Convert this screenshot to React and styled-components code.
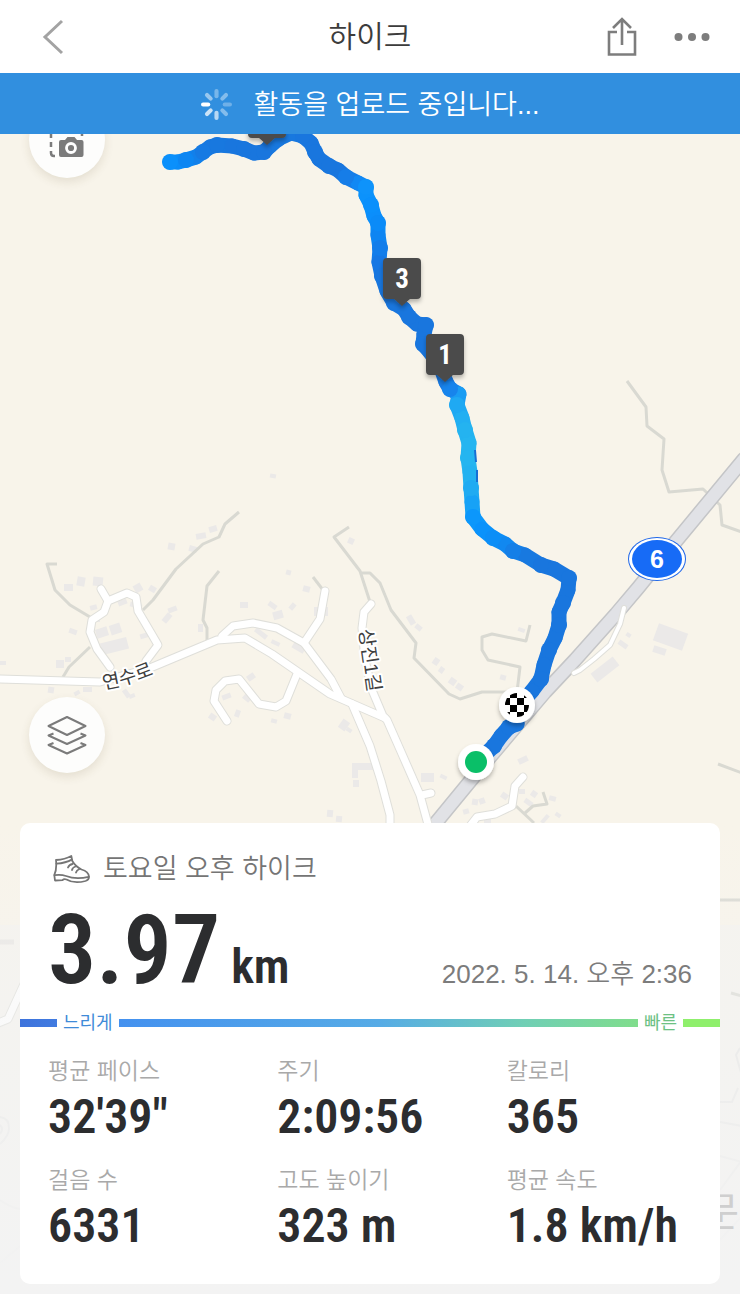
import React from "react";
import styled, { createGlobalStyle } from "styled-components";

const sans = `"Liberation Sans", "Noto Sans CJK KR", sans-serif`;
const narrow = `"Roboto Condensed", "Roboto", "Noto Sans CJK KR", sans-serif`;

const GlobalStyle = createGlobalStyle`
  * { box-sizing: border-box; }
  body { margin: 0; font-family: ${sans}; background: #f3f3f3; }
  button { border: 0; padding: 0; background: none; font: inherit; cursor: pointer; }
`;

const Screen = styled.div`
  display: flex;
  flex-direction: column;
  min-height: 100vh;
`;

const Header = styled.header`
  display: grid;
  grid-template-columns: 1fr auto 1fr;
  align-items: center;
  height: 73px;
  padding: 0 18px;
  background: #fff;
`;

const Title = styled.h1`
  margin: 0;
  font-size: 30px;
  line-height: 40px;
  font-weight: 350;
  color: #3c3c3c;
`;

const HeaderActions = styled.div`
  display: flex;
  justify-content: flex-end;
  gap: 10px;
`;

const IconButton = styled.button`
  display: flex;
  align-items: center;
  justify-content: center;
  width: ${(p) => (p.$back ? "72px" : "60px")};
  height: 48px;
  color: ${(p) => (p.$back ? "#a3a3a3" : "#7d7d7d")};
`;

const Banner = styled.div`
  display: flex;
  align-items: center;
  justify-content: center;
  gap: 22px;
  height: 61px;
  padding-top: 2px;
  background: #318fdf;
  color: #fff;
  font-size: 27px;
  line-height: 36px;
  font-weight: 350;
`;

const MapArea = styled.main`
  position: relative;
  flex: 1;
  display: flex;
  flex-direction: column;
  justify-content: flex-end;
  padding: 480px 20px 10px;
  overflow: hidden;
  background: #f8f4ea;
`;

const MapCanvas = styled.svg`
  position: absolute;
  inset: 0;
  width: 100%;
  height: 100%;
`;

const RoundButton = styled.button`
  position: relative;
  display: flex;
  align-items: center;
  justify-content: center;
  flex: none;
  width: 76px;
  height: 76px;
  margin: 0 0 50px 9px;
  border-radius: 50%;
  background: #fdfdfc;
  color: #7b7b7b;
  box-shadow: 0 4px 10px rgba(90, 70, 30, 0.12);
`;

const CameraButton = styled(RoundButton)`
  position: absolute;
  top: -32px;
  left: 20px;
`;

const Card = styled.section`
  position: relative;
  padding: 28px 0;
  border-radius: 10px;
  background: #fff;
`;

const CardTitle = styled.h2`
  display: flex;
  align-items: center;
  gap: 12px;
  margin: 0;
  padding: 0 33px;
  font-size: 27px;
  line-height: 36px;
  font-weight: 350;
  color: #757575;
`;

const Summary = styled.div`
  display: flex;
  align-items: baseline;
  justify-content: space-between;
  margin: 11px 0 8px;
  padding: 0 28px;
`;

const Distance = styled.p`
  display: flex;
  align-items: baseline;
  gap: 11px;
  margin: 0;
  font-family: ${narrow};
  font-size: 96px;
  line-height: 104px;
  font-weight: 600;
  color: #2c2d2f;
`;

const Unit = styled.span`
  font-size: 48px;
  line-height: 60px;
`;

const DateText = styled.time`
  font-size: 26px;
  line-height: 36px;
  font-weight: 350;
  color: #7c7c7c;
`;

const PaceScale = styled.div`
  display: flex;
  align-items: center;
  gap: 6px;
  height: 26px;
  font-size: 18px;
  line-height: 26px;
`;

const ScaleBar = styled.span`
  flex: ${(p) => (p.$wide ? "1" : "0 0 37px")};
  height: 8px;
  background: ${(p) => p.$fill};
`;

const ScaleLabel = styled.span`
  color: ${(p) => p.$color};
`;

const Stats = styled.dl`
  display: grid;
  grid-template-columns: repeat(3, 1fr);
  gap: 17px 16px;
  margin: 19px 0 0;
  padding-left: 28px;
`;

const StatLabel = styled.dt`
  font-size: 23px;
  line-height: 32px;
  font-weight: 350;
  color: #a9a9a9;
`;

const StatValue = styled.dd`
  margin: 0;
  font-family: ${narrow};
  font-size: 48px;
  line-height: 60px;
  font-weight: 600;
  color: #2c2d2f;
  white-space: nowrap;
`;

const stats = [
  ["평균 페이스", `32'39"`],
  ["주기", "2:09:56"],
  ["칼로리", "365"],
  ["걸음 수", "6331"],
  ["고도 높이기", "323 m"],
  ["평균 속도", "1.8 km/h"],
];

/* Recorded track: x, y and the pace colour from that point on */
const track = [
  [170, 162, "#0b90fb"], [178, 162, "#0b8cf8"], [186, 160, "#0d86f2"], [196, 157, "#1280ea"],
  [203, 152, "#167ae3"], [210, 147, "#1878df"], [217, 145, "#1878df"], [232, 146, "#1976de"],
  [244, 149, "#1976de"], [254, 153, "#1976de"], [264, 152, "#1976de"], [270, 146, "#1878df"],
  [278, 139, "#1878df"], [291, 133, "#1878df"], [303, 136, "#1976de"], [311, 143, "#1976de"],
  [315, 152, "#1976de"], [319, 159, "#1976de"], [329, 166, "#1976de"], [338, 170, "#1976de"],
  [346, 177, "#167de8"], [358, 183, "#1188f4"], [366, 187, "#0e93fb"], [366, 195, "#0c92fb"],
  [371, 205, "#0a90fc"], [374, 216, "#0b8efb"], [378, 223, "#0b8bf8"], [378, 235, "#0e85f2"],
  [380, 248, "#137dea"], [379, 262, "#1677e4"], [382, 276, "#1976de"], [387, 291, "#1976de"],
  [394, 303, "#1976de"], [404, 309, "#1976de"], [409, 317, "#1976de"], [417, 324, "#1976de"],
  [426, 325, "#1976de"], [424, 334, "#1976de"], [423, 344, "#1976de"], [430, 352, "#1976de"],
  [441, 368, "#1976de"], [446, 382, "#187be4"], [450, 389, "#1784ec"], [459, 394, "#1a9cf3"],
  [457, 405, "#1fa9f3"], [462, 418, "#22aff2"], [465, 430, "#24b3f0"], [469, 443, "#25b5f0"],
  [468, 458, "#25b5f0"], [470, 472, "#24b2f0"], [471, 488, "#20abf2"], [472, 502, "#17a2f6"],
  [473, 517, "#0c97fb"], [482, 529, "#0a92fb"], [493, 538, "#0c8ef7"], [505, 544, "#1188f0"],
  [513, 551, "#157fe7"], [525, 555, "#1879e0"], [541, 565, "#1976de"], [554, 569, "#1976de"],
  [569, 578, "#1976de"], [568, 590, "#1976de"], [563, 603, "#1976de"], [559, 612, "#1976de"],
  [559, 625, "#1976de"], [555, 638, "#1976de"], [549, 650, "#1976de"], [544, 665, "#1976de"],
  [541, 679, "#1976de"], [532, 691, "#1976de"], [517, 708, "#1976de"], [517, 724, "#1976de"],
  [509, 727, "#1976de"], [501, 736, "#1976de"], [494, 746, "#1976de"], [477, 762, "#1976de"],
];

const streets = [
  "M-4 679 L100 682 L150 668 L217 640 L245 638 L272 654 L330 694 L385 718",
  "M110 667 L97 649 L90 632 L92 620 L104 612 L108 601 L127 593 L136 597 L138 611 L151 633 L158 645 L146 661",
  "M108 601 L101 589",
  "M222 636 L233 626 L253 623 L277 628 L304 643 L331 679 L341 698",
  "M304 643 L320 619 L325 591",
  "M371 604 L364 612 L362 628 L365 660 L372 690 L383 716 L387 720 L402 754 L420 795 L429 828",
  "M227 721 L214 701 L216 690 L225 681 L239 679 L259 704 L276 707 L286 701 L297 674",
  "M352 704 L370 746 L381 781 L390 815 L390 828",
  "M422 795 L431 793",
  "M470 826 L477 817 L495 814 L512 806 L515 786 L523 777",
  "M-4 1024 L8 1019 L24 984",
];

const thinStreets = ["M624 608 L620 624 L610 645 L594 659 L580 670 L574 673"];

const paths = [
  "M57 564 L47 564 L55 590 L70 605 L90 617",
  "M239 512 L225 524 L219 537 L203 544 L176 569 L153 600 L143 610",
  "M219 571 L207 586 L203 620 L207 628 L207 641",
  "M90 647 L69 667 L63 677",
  "M349 527 L334 537 L360 571 L370 602",
  "M360 573 L370 573 L380 583 L391 610 L416 643 L414 658 L449 694 L460 699 L482 692 L510 692",
  "M313 577 L323 590",
  "M530 625 L526 641 L492 634 L482 637 L482 650 L488 660 L520 667 L517 692",
  "M627 381 L646 407 L647 426 L664 439 L662 470 L669 492 L703 489 L720 505 L722 525 L742 532",
  "M718 764 L742 773",
  "M516 806 L534 823",
  "M525 813 L533 806 L547 804 L543 792",
  "M718 900 L742 900",
  "M731 993 L742 996",
];

/* Buildings: x, y, width, height, rotation */
const buildings = [
  [64, 584, 9, 7, 0], [77, 577, 8, 9, 10], [93, 577, 10, 9, 5], [168, 543, 7, 7, 10],
  [189, 546, 8, 6, 15], [196, 533, 10, 6, -10], [209, 526, 8, 6, -15], [96, 628, 12, 9, -18],
  [110, 624, 11, 10, -18], [101, 640, 27, 12, -14], [90, 605, 7, 5, -15], [69, 629, 8, 5, 20],
  [134, 584, 8, 8, -30], [149, 586, 7, 6, 30], [118, 600, 9, 5, -20], [130, 603, 12, 5, 15],
  [162, 615, 10, 6, -50], [168, 607, 9, 5, -20], [140, 633, 10, 5, -15], [92, 616, 8, 6, 0],
  [56, 660, 8, 8, 0], [65, 657, 6, 5, 0], [0, 661, 6, 4, 0], [48, 687, 6, 6, 10],
  [74, 691, 6, 4, -30], [83, 687, 9, 5, 0], [124, 689, 5, 9, -35], [129, 694, 6, 4, -20],
  [198, 624, 5, 8, 0], [240, 602, 8, 6, 0], [268, 603, 9, 5, 35], [273, 611, 10, 8, -15],
  [290, 603, 5, 7, 40], [303, 586, 7, 6, 15], [286, 570, 5, 5, 15], [254, 631, 14, 5, 38],
  [271, 641, 9, 4, 25], [292, 645, 13, 6, 30], [314, 607, 14, 9, 0], [247, 674, 8, 6, -35],
  [222, 694, 9, 5, -20], [243, 695, 8, 6, 40], [235, 710, 5, 7, 20], [209, 714, 7, 6, 35],
  [271, 719, 6, 4, 15], [284, 713, 7, 6, 15], [340, 720, 8, 10, 35], [346, 728, 6, 4, 35],
  [352, 763, 21, 7, 0], [352, 770, 6, 8, 0], [353, 780, 6, 7, 0], [327, 810, 6, 7, 5],
  [336, 816, 6, 6, 5], [421, 773, 13, 9, 0], [440, 775, 7, 4, 25], [348, 538, 6, 6, 25],
  [408, 615, 6, 10, -30], [415, 625, 7, 5, 40], [433, 658, 6, 7, 35], [439, 667, 5, 6, 35],
  [449, 678, 7, 7, 35], [456, 684, 7, 6, 35], [500, 675, 6, 5, 15], [518, 628, 7, 4, 20],
  [618, 642, 10, 5, 35], [626, 633, 5, 4, 35], [655, 628, 31, 18, 20], [653, 647, 13, 7, 18],
  [591, 664, 28, 11, -38], [518, 757, 10, 6, -25], [501, 793, 7, 6, 35], [472, 799, 6, 6, 10],
  [479, 798, 6, 6, -20], [463, 809, 6, 5, -15], [519, 789, 6, 5, 0], [524, 800, 9, 5, 35],
  [531, 791, 6, 6, 35], [549, 796, 7, 5, 15], [540, 817, 10, 4, -50], [555, 813, 6, 4, 35],
  [484, 819, 7, 4, 0], [270, 474, 6, 4, 10],
];

const highway = "M744 459 L677 540 L638 588 L616 614 L575 660 L545 692 L490 757 L430 830";

function KmMarker({ x, y, label }) {
  return (
    <g>
      <path
        d={`M${x - 15} ${y} h30 q4 0 4 4 v33 q0 4 -4 4 h-7 l-8 7 l-8 -7 h-7 q-4 0 -4 -4 v-33 q0 -4 4 -4z`}
        fill="#4c4c4c"
        filter="url(#drop)"
      />
      {label && (
        <text x={x} y={y + 30} textAnchor="middle" fontFamily={narrow} fontWeight="700" fontSize="27" fill="#fff">
          {label}
        </text>
      )}
    </g>
  );
}

function TrailMap() {
  return (
    <MapCanvas viewBox="0 134 740 1160" preserveAspectRatio="xMidYMin slice" role="img" aria-label="하이크 경로 지도">
      <defs>
        <filter id="drop" x="-40%" y="-40%" width="180%" height="180%">
          <feDropShadow dx="0" dy="3" stdDeviation="2" floodOpacity="0.28" />
        </filter>
        <linearGradient id="fade" x1="0" y1="0" x2="0" y2="1">
          <stop offset="0" stopColor="#f3f3f3" stopOpacity="0" />
          <stop offset="0.8" stopColor="#f3f3f3" stopOpacity="0.85" />
          <stop offset="1" stopColor="#f3f3f3" />
        </linearGradient>
        <clipPath id="flag"><circle cx="517" cy="705" r="12" /></clipPath>
        <path id="yeonsu" d="M104 689 Q124 687 160 672" />
        <path id="sangjin" d="M359 630 L369 700" />
      </defs>
      <rect x="0" y="134" width="740" height="1160" fill="#f8f4ea" />
      <path d="M0 925 H20 V1294 H0z M720 925 H740 V1294 H720z" fill="#f5f3ee" />
      <g fill="#ebe9e8">
        {buildings.map(([x, y, w, h, r]) => (
          <rect key={`${x}-${y}`} x={x} y={y} width={w} height={h} transform={`rotate(${r} ${x + w / 2} ${y + h / 2})`} />
        ))}
      </g>
      <g fill="none" stroke="#d9d9d2" strokeWidth="3" strokeLinejoin="round">
        {paths.map((d) => <path key={d} d={d} />)}
      </g>
      <g fill="none" strokeLinejoin="round" strokeLinecap="round">
        <path d={highway} stroke="#c4c5c7" strokeWidth="15" />
        <path d={highway} stroke="#e1e2e6" strokeWidth="12" />
        <g stroke="#dfdfda" strokeWidth="9">{streets.map((d) => <path key={d} d={d} />)}</g>
        <g stroke="#dfdfda" strokeWidth="6">{thinStreets.map((d) => <path key={d} d={d} />)}</g>
        <g stroke="#fff" strokeWidth="7">{streets.map((d) => <path key={d} d={d} />)}</g>
        <g stroke="#fff" strokeWidth="4">{thinStreets.map((d) => <path key={d} d={d} />)}</g>
      </g>
      <g fontSize="19" fill="#3f3f3f" stroke="#fff" strokeWidth="4" paintOrder="stroke" strokeLinejoin="round">
        <text><textPath href="#yeonsu">연수로</textPath></text>
        <text><textPath href="#sangjin">상진1길</textPath></text>
      </g>
      <g strokeLinecap="round" strokeWidth="15">
        {track.slice(1).map(([x, y], i) => (
          <line key={i} x1={track[i][0]} y1={track[i][1]} x2={x} y2={y} stroke={track[i][2]} />
        ))}
      </g>
      {track.map(([x, y, colour], i) => (i % 2 ? null : <circle key={i} cx={x} cy={y} r="8" fill={colour} />))}
      <path d="M475 450 L476 462 M477 470 L477 482" fill="none" stroke="#176fd4" strokeWidth="2" />
      <KmMarker x={267} y={97} />
      <KmMarker x={402} y={258} label="3" />
      <KmMarker x={445} y={334} label="1" />
      <g>
        <ellipse cx="657" cy="559" rx="29" ry="22" fill="#1f66e8" />
        <ellipse cx="657" cy="559" rx="28" ry="21" fill="#fff" />
        <ellipse cx="657" cy="559" rx="25" ry="19" fill="#176bf6" />
        <text x="657" y="568" textAnchor="middle" fontFamily={sans} fontWeight="700" fontSize="25" fill="#fff">6</text>
      </g>
      <circle cx="517" cy="705" r="18" fill="#fff" filter="url(#drop)" />
      <g clipPath="url(#flag)" fill="#000">
        {[0, 1, 2, 3].flatMap((r) =>
          [0, 1, 2, 3].map((c) =>
            (r + c) % 2 ? <rect key={`${r}${c}`} x={503 + c * 7} y={691 + r * 7} width="7" height="7" /> : null
          )
        )}
      </g>
      <circle cx="476" cy="762" r="18" fill="#fff" filter="url(#drop)" />
      <circle cx="476" cy="762" r="11" fill="#0abf68" />
      <g fill="none" stroke="#e4e4e2" strokeWidth="2">
        <path d="M0 1117 Q9 1118 9 1128 Q9 1136 0 1144 M0 1125 Q4 1129 0 1134 M0 1200 Q9 1207 20 1209 M20 1246 L0 1263" />
        <path d="M740 1048 L736 1055 L742 1076 M720 1102 L732 1102 L738 1088 M720 1122 L742 1126 M720 1156 L742 1162 M720 1190 L742 1160 M720 1240 L742 1216" />
        <path d="M0 942 H14" strokeWidth="5" stroke="#e9e7e4" />
      </g>
      <rect x="0" y="823" width="740" height="471" fill="url(#fade)" />
      <text x="739" y="1226" textAnchor="end" fontSize="40" fill="#cfcfcf">문</text>
    </MapCanvas>
  );
}

function Spinner() {
  const opacity = [0.35, 0.4, 0.3, 0.4, 0.65, 0.75, 1, 0.5];
  return (
    <svg width="31" height="31" viewBox="-15 -15 30 30" aria-hidden="true">
      {opacity.map((o, i) => (
        <rect key={i} x="-2" y="-15" width="4" height="9" rx="2" fill="#fff" opacity={o} transform={`rotate(${i * 45})`} />
      ))}
    </svg>
  );
}

function BootIcon() {
  return (
    <svg width="38" height="29" viewBox="0 0 38 29" fill="none" stroke="currentColor" strokeWidth="1.8" strokeLinejoin="round" strokeLinecap="round" aria-hidden="true">
      <path d="M3 5 Q12 4.5 18.3 1 L19.3 6 Q22.5 11.5 28.5 14.5 Q35.5 16.5 36 21.5 Q36 25 32.5 26 Q21 29 13.5 24.5 Q11 23.4 9.5 25.2 L2 25.5 L1.3 20 Q4 14 3 5z" />
      <path d="M3.4 8.6 Q13 8 18.8 4.6 M1.5 20.2 Q8 19.2 13 21 Q23 25 35.7 21.8 M15 12.5 Q16 9.8 19.5 9 M19 15 Q19.5 12.5 22.5 11.5 M23 17.5 Q23.5 15.2 26.5 14" />
    </svg>
  );
}

export default function App() {
  return (
    <Screen>
      <GlobalStyle />
      <Header>
        <IconButton $back aria-label="뒤로">
          <svg width="24" height="36" viewBox="0 0 24 36" fill="none" stroke="currentColor" strokeWidth="3">
            <path d="M20 2 L3 18 L20 34" />
          </svg>
        </IconButton>
        <Title>하이크</Title>
        <HeaderActions>
          <IconButton aria-label="공유">
            <svg width="30" height="40" viewBox="0 0 30 40" fill="none" stroke="currentColor" strokeWidth="2.6">
              <path d="M10 15 H2 V37.5 H28 V15 H20 M15 28 V2.5 M6 11 L15 2 L24 11" />
            </svg>
          </IconButton>
          <IconButton aria-label="더보기">
            <svg width="36" height="10" viewBox="0 0 36 10" fill="currentColor">
              <circle cx="4.5" cy="5" r="4" />
              <circle cx="18" cy="5" r="4" />
              <circle cx="31.5" cy="5" r="4" />
            </svg>
          </IconButton>
        </HeaderActions>
      </Header>
      <Banner role="status">
        <Spinner />
        <span>활동을 업로드 중입니다...</span>
      </Banner>
      <MapArea>
        <TrailMap />
        <CameraButton aria-label="사진 촬영">
          <svg width="36" height="36" viewBox="0 0 36 36" fill="none" aria-hidden="true">
            <path d="M2 11 V16 M2 20 V25 M2 29 V31 Q2 34 5 34 H6 M33 11 V14 M2 7 V4 Q2 2 4 2 H7 M11 2 H16 M20 2 H25 M29 2 H31 Q33 2 33 4 V7" stroke="currentColor" strokeWidth="2.5" />
            <path d="M12 18 H16 L18.5 15 H25.5 L28 18 H32.5 Q34.5 18 34.5 20 V33 Q34.5 35 32.5 35 H12 Q10 35 10 33 V20 Q10 18 12 18z" fill="currentColor" />
            <circle cx="22" cy="26" r="4.5" stroke="#fff" strokeWidth="2.8" />
          </svg>
        </CameraButton>
        <RoundButton aria-label="지도 레이어">
          <svg width="40" height="40" viewBox="0 0 40 40" fill="none" stroke="currentColor" strokeWidth="2" strokeLinejoin="round" aria-hidden="true">
            <path d="M20 2 L38.5 11 L20 20 L1.5 11z M6.5 18.5 L1.5 20.5 L20 29 L38.5 20.5 L33.5 18.5 M6.5 28 L1.5 30 L20 38.5 L38.5 30 L33.5 28" />
          </svg>
        </RoundButton>
        <Card>
          <CardTitle>
            <BootIcon />
            토요일 오후 하이크
          </CardTitle>
          <Summary>
            <Distance>
              3.97<Unit>km</Unit>
            </Distance>
            <DateText dateTime="2022-05-14T14:36">2022. 5. 14. 오후 2:36</DateText>
          </Summary>
          <PaceScale>
            <ScaleBar $fill="linear-gradient(90deg, #3d73dc, #417be0)" />
            <ScaleLabel $color="#3f8bd8">느리게</ScaleLabel>
            <ScaleBar $wide $fill="linear-gradient(90deg, #4491ef, #56abe6 50%, #70cfb5 78%, #80dd8c)" />
            <ScaleLabel $color="#6dc183">빠른</ScaleLabel>
            <ScaleBar $fill="#8fef6c" />
          </PaceScale>
          <Stats>
            {stats.map(([label, value]) => (
              <div key={label}>
                <StatLabel>{label}</StatLabel>
                <StatValue>{value}</StatValue>
              </div>
            ))}
          </Stats>
        </Card>
      </MapArea>
    </Screen>
  );
}
